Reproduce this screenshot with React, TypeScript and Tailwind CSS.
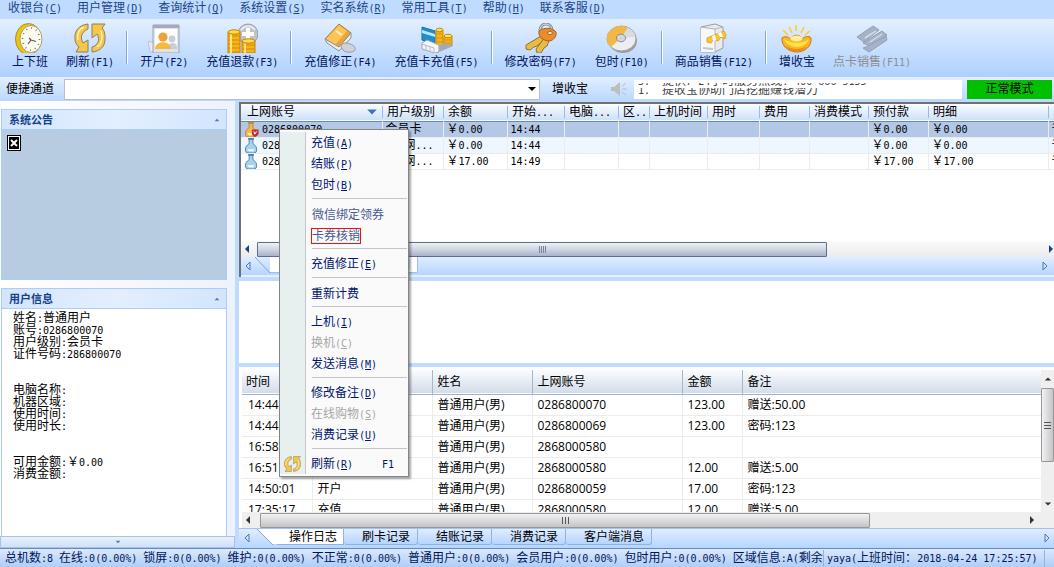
import React from 'react';
import clsx from 'clsx';

const latin = "font-['DejaVu_Sans_Mono',monospace] text-[10px]";

// Half-width characters take half the width of a Chinese one
const Txt: React.FC<{ text: string }> = ({ text }) => (
  <span className="whitespace-pre">
    {text.split(/([\x20-\x7e]+)/).map((part, i) =>
      i % 2 ? (
        <span key={i} className={latin}>
          {part}
        </span>
      ) : (
        part
      )
    )}
  </span>
);

// Label followed by its underlined access key
const KeyLabel: React.FC<{ label: string; hotkey?: string }> = ({ label, hotkey }) => (
  <span className="whitespace-pre">
    {label}
    {hotkey && (
      <span className={latin}>
        (<u>{hotkey}</u>)
      </span>
    )}
  </span>
);

const RefreshArrows: React.FC<{ className: string }> = ({ className }) => (
  <svg className={className} viewBox="0 0 32 30">
    <g fill="#f5c648" stroke="#8a8060" strokeWidth="1">
      <path d="M14 1C5 2 0 8 1 16c0 4 2 6 4 8l-3 5h12V17l-5 3C6 15 7 9 14 6z" />
      <path d="M18 1h13l-3 4c3 3 3 7 3 11 0 8-5 12-13 13v-5c7-2 8-8 5-13l-5 4z" />
    </g>
    <path d="M10 4C5 6 3 11 4 17M27 8c2 6 1 13-4 16" fill="none" stroke="#fff0a8" strokeWidth="1.5" />
  </svg>
);

const Icon: React.FC<{ name: string }> = ({ name }) => {
  if (name === 'refresh') return <RefreshArrows className="w-8 h-[30px]" />;
  return (
    <svg className="w-8 h-[30px]" viewBox="0 0 32 30">
      {name === 'clock' && (
        <>
          <ellipse cx="14.500" cy="16" rx="13" ry="15.500" fill="#efc400" stroke="#a08c50" />
          <ellipse cx="17" cy="16" rx="11" ry="13.5" fill="#fffdf2" stroke="#b0a068" />
          <ellipse cx="17" cy="16" rx="8.5" ry="11" fill="none" stroke="#777" strokeWidth="1.6" strokeDasharray="1 4.1" />
          <path d="M17 17l5 1.5M17 17l-3 4M17 17l-2-2" stroke="#555" strokeWidth="1.2" fill="none" />
        </>
      )}
      {name === 'user' && (
        <>
          <path d="M0 18l6 2v9H2z" fill="#e8ecf2" stroke="#bcc3cf" />
          <path d="M5 2h26v28H5z" fill="#dfe3e9" stroke="#9aa3b0" />
          <path d="M5 2h26v3H5z" fill="#a4abb6" />
          <path d="M7 6h22v20H7z" fill="#fdfdfd" />
          <circle cx="24" cy="16" r="3.4" fill="#c9cdd4" />
          <path d="M19 26c0-7 10-8 10-2v2z" fill="#c9cdd4" />
          <circle cx="15" cy="14" r="4.6" fill="#f0a23a" />
          <path d="M7 26c0-9 16-9 16 0z" fill="#f7b93a" />
        </>
      )}
      {name === 'coins' && (
        <>
          <circle cx="22" cy="11" r="10" fill="#bfc3c9" stroke="#999fa8" />
          <path d="M15 7c4-5 10-5 14 0" stroke="#e9ebee" strokeWidth="2" fill="none" />
          <path d="M20 5h4v4h4v4h-4v4h-4v-4h-4V9h4z" fill="#fff" />
          <path d="M2 9h12v21H2zM16 18h13v12H16z" fill="#f6b31c" stroke="#c98200" />
          <path d="M2 13h12M2 17h12M2 21h12M2 25h12M2 29h12M16 22h13M16 26h13" stroke="#d28a00" />
          <path d="M5 10v20M19 19v11" stroke="#ffe477" strokeWidth="2" />
          <ellipse cx="8" cy="9" rx="6" ry="2.2" fill="#ffd94f" stroke="#c98200" />
          <ellipse cx="22.500" cy="18" rx="6.500" ry="2.200" fill="#ffd94f" stroke="#c98200" />
        </>
      )}
      {name === 'book' && (
        <>
          <path d="M15 1l12 9-12 15L1 16z" fill="#eba43a" stroke="#99803f" />
          <path d="M15 2l8 6-12 14-9-6z" fill="#ffc456" />
          <path d="M1 16l2 4 12 8 12-13v-5L15 24z" fill="#eceded" stroke="#8f8f8f" />
          <path d="M12 8l6 4" stroke="#fff3c4" strokeWidth="2" />
          <path d="M17 24c0-4 5-5 9-3 4 1 6 4 5 6-2 3-9 3-12 0z" fill="#d0d2d6" stroke="#97999e" />
        </>
      )}
      {name === 'card' && (
        <>
          <path d="M1 4l13 4v13L1 17z" fill="#1f8fd0" stroke="#1670aa" />
          <path d="M1 7l13 4v3L1 10z" fill="#b9e4fa" />
          <path d="M15 7h7v16h-7zM23 13h8v10h-8z" fill="#f6b31c" stroke="#d08b00" />
          <path d="M15 11h7M15 15h7M15 19h7M23 17h8M23 20h8" stroke="#d99500" />
          <ellipse cx="18.500" cy="7" rx="3.500" ry="1.800" fill="#ffdf60" stroke="#d08b00" />
          <ellipse cx="27" cy="13" rx="4" ry="1.800" fill="#ffdf60" stroke="#d08b00" />
          <path d="M1 20l5-3 12 5v7l-4 1L1 26z" fill="#f4f5f8" stroke="#9da5b3" />
          <path d="M1 21l12 4v5M5 22v6M9 24v5" stroke="#b5bbc7" fill="none" />
          <path d="M18 29l12-5 2-2-9-2-5 3z" fill="#a3aab6" />
        </>
      )}
      {name === 'keys' && (
        <>
          <circle cx="21" cy="7" r="6" fill="none" stroke="#8c8c8c" strokeWidth="3" />
          <circle cx="21" cy="7" r="6" fill="none" stroke="#e1e3e6" />
          <path d="M16 13L1 22v4l4 1 4-3 3-1 7-6z" fill="#e9bb45" stroke="#8f7428" />
          <path d="M20 14l-9 12 1 4h4l3-5 3-2 3-8z" fill="#e9bb45" stroke="#8f7428" />
          <path d="M14 8c6-5 15-2 17 1 1 5-3 8-6 9-7 0-12-4-11-10z" fill="#ea8b2e" stroke="#9b6429" />
          <ellipse cx="25" cy="10" rx="2.500" ry="1.500" fill="#fff3dc" stroke="#a9641c" />
        </>
      )}
      {name === 'disc' && (
        <>
          <ellipse cx="17" cy="18" rx="14" ry="12" fill="#9c9ea3" />
          <ellipse cx="15.500" cy="15.500" rx="14.500" ry="12.500" fill="#eceef1" stroke="#a2a2a2" />
          <path d="M15 15L5 24C-1 18 0 8 8 5c5-3 11-2 14 0z" fill="#f5b743" />
          <path d="M15 15l7-10c4 2 6 5 7 9z" fill="#d9dbe0" />
          <ellipse cx="15" cy="15" rx="4.500" ry="3.800" fill="#d7d9de" stroke="#87888c" />
          <ellipse cx="15" cy="15" rx="2" ry="1.600" fill="#bcd5f7" />
        </>
      )}
      {name === 'shop' && (
        <>
          <path d="M3 4l14-3 8 3v21l-8 4H3z" fill="#e9eaec" stroke="#9a9da3" />
          <path d="M3 5l14 2v22H3z" fill="#f7f7f8" />
          <path d="M3 4l14 2v23M17 6l8-2" stroke="#b4b7bd" fill="none" />
          <path d="M9 15l17-7 2 4-1 4-4-2-3 4-4-2-3 4-4-1z" fill="#fbc531" stroke="#d8a73c" />
          <path d="M14 13l3-1 1 5-3 1zM20 10l3-1 2 5-3 0z" fill="#fff" />
          <path d="M5 25l10 1" stroke="#c3c5ca" strokeWidth="2" />
        </>
      )}
      {name === 'ingot' && (
        <>
          <path d="M15 8V2M11 10L8 4M20 10l3-6M7 12L2 7M24 12l5-4" stroke="#ffd11c" strokeWidth="1.6" />
          <path d="M1 15c3-3 8 0 9 1 1-5 10-5 11 0 2-2 7-4 9-1 1 8-6 14-14 14S0 23 1 15z" fill="#f9b81e" stroke="#d0701c" />
          <ellipse cx="15.500" cy="15.500" rx="6" ry="3" fill="#fff09a" />
          <path d="M3 16c7 5 18 5 25 0-1 4-6 8-12 8S4 20 3 16z" fill="#ffe04a" />
          <path d="M5 23c6 4 15 4 21 0-4 7-17 7-21 0z" fill="#f0851d" />
        </>
      )}
      {name === 'cards' && (
        <g fill="#a6b3c6" stroke="#93a0b5">
          <path d="M1 14L17 3l6 4L8 19z" />
          <path d="M7 20L26 8l5 4-15 12z" />
          <path d="M10 24l20-11 1 4-18 12-6-4z" />
          <path d="M9 15L20 8M14 19l12-8" stroke="#d3dbe8" strokeWidth="1.500" />
        </g>
      )}
    </svg>
  );
};

const Flask: React.FC<{ gold?: boolean }> = ({ gold }) => (
  <svg className="w-[15px] h-[15px] shrink-0" viewBox="0 0 15 16">
    <path
      d="M5 0h4v6c3 2 4 4 4 6 0 3-1 4-3 4H4c-2 0-3-1-3-4 0-2 1-4 4-6z"
      fill={gold ? '#f5b547' : '#a8d0ef'}
      stroke={gold ? '#c5852a' : '#4a81ae'}
    />
    <path d="M4 1h6" stroke={gold ? '#c5852a' : '#4a81ae'} strokeWidth="2" />
    <path d="M3 12h8l-2 2H5z" fill="#f4faff" />
    {gold && <path d="M8 8h7v4c0 2-2 3-4 4-2-1-3-2-3-4z" fill="#b83232" />}
    {gold && <path d="M10 10l1 3 2-3" stroke="#fff" fill="none" />}
  </svg>
);

const Arrow: React.FC<{ dir: 'left' | 'right' | 'up' | 'down'; className: string; outline?: boolean }> = ({ dir, className, outline }) => {
  const paths = { left: 'M6 1v8L2 5z', right: 'M3 1v8l4-4z', up: 'M1 7h8L5 3z', down: 'M1 3h8L5 7z' };
  return (
    <svg className={clsx('shrink-0', className)} viewBox="0 0 10 10">
      <path d={paths[dir]} fill={outline ? 'none' : 'currentColor'} stroke={outline ? 'currentColor' : 'none'} />
    </svg>
  );
};

const menus: [string, string][] = [
  ['收银台', 'C'],
  ['用户管理', 'D'],
  ['查询统计', 'Q'],
  ['系统设置', 'S'],
  ['实名系统', 'R'],
  ['常用工具', 'T'],
  ['帮助', 'H'],
  ['联系客服', 'D'],
];

const tools = [
  [['clock', '上下班'], ['refresh', '刷新(F1)']],
  [['user', '开户(F2)'], ['coins', '充值退款(F3)']],
  [['book', '充值修正(F4)'], ['card', '充值卡充值(F5)']],
  [['keys', '修改密码(F7)'], ['disc', '包时(F10)']],
  [['shop', '商品销售(F12)']],
  [['ingot', '增收宝'], ['cards', '点卡销售(F11)']],
];

const listCols = ['上网账号', '用户级别', '余额', '开始...', '电脑...', '区..', '上机时间', '用时', '费用', '消费模式', '预付款', '明细', ''];

const listRows = [
  ['0286800070', '会员卡', '￥0.00', '14:44', '', '', '', '', '', '', '￥0.00', '￥0.00', '千'],
  ['0286800069', 'VIP网...', '￥0.00', '14:44', '', '', '', '', '', '', '￥0.00', '￥0.00', '千'],
  ['0286800059', 'VIP网...', '￥17.00', '14:49', '', '', '', '', '', '', '￥17.00', '￥17.00', '千'],
];

const logRows = [
  ['14:44:49', '充值', '普通用户(男)', '0286800070', '123.00', '赠送:50.00'],
  ['14:44:20', '开户', '普通用户(男)', '0286800069', '123.00', '密码:123'],
  ['16:58:32', '结账', '普通用户(男)', '2868000580', '', ''],
  ['16:51:08', '充值', '普通用户(男)', '2868000580', '12.00', '赠送:5.00'],
  ['14:50:01', '开户', '普通用户(男)', '0286800059', '17.00', '密码:123'],
  ['17:35:17', '充值', '普通用户(男)', '2868000580', '12.00', '赠送:5.00'],
];

const logTabs = ['刷卡记录', '结账记录', '消费记录', '客户端消息'];

const userInfo = [
  '姓名:普通用户',
  '账号:0286800070',
  '用户级别:会员卡',
  '证件号码:286800070',
  '',
  '',
  '电脑名称:',
  '机器区域:',
  '使用时间:',
  '使用时长:',
  '',
  '',
  '可用金额:￥0.00',
  '消费金额:',
];

interface MenuEntry {
  label: string;
  hotkey?: string;
  disabled?: boolean;
  link?: boolean;
  boxed?: boolean;
  shortcut?: string;
}

const contextMenu: MenuEntry[][] = [
  [{ label: '充值', hotkey: 'A' }, { label: '结账', hotkey: 'P' }, { label: '包时', hotkey: 'B' }],
  [{ label: '微信绑定领券', link: true }, { label: '卡券核销', link: true, boxed: true }],
  [{ label: '充值修正', hotkey: 'E' }],
  [{ label: '重新计费' }],
  [{ label: '上机', hotkey: 'I' }, { label: '换机', hotkey: 'C', disabled: true }, { label: '发送消息', hotkey: 'M' }],
  [{ label: '修改备注', hotkey: 'D' }, { label: '在线购物', hotkey: 'S', disabled: true }, { label: '消费记录', hotkey: 'U' }],
  [{ label: '刷新', hotkey: 'R', shortcut: 'F1' }],
];

const PanelHeader: React.FC<{ title: string }> = ({ title }) => (
  <div className="flex items-center justify-between h-5 pl-[7px] pr-1.5 border-b border-[#a8ceff] bg-linear-to-r from-[#d3e5fd] via-[#e3efff] to-[#d3e5fd] shrink-0">
    <h2 className="font-bold text-[11px] text-[#15428b]">{title}</h2>
    <button aria-label={`收起${title}`}>
      <Arrow dir="up" className="w-1.5 h-1.5 text-[#4f79b5]" />
    </button>
  </div>
);

const ContextMenu = () => (
  <div role="menu" className="absolute left-[279px] top-[129px] w-[130px] flex flex-col border border-[#848484] bg-[#fafafa] shadow-[2px_2px_2px_rgba(0,0,0,0.35)] py-0.5">
    {contextMenu.map((group, g) => (
      <React.Fragment key={g}>
        {g > 0 && (
          <div className="flex h-2">
            <span className="w-[26px] bg-[#e8efef] border-r border-[#c5c5c5]" />
            <span className="flex-1 ml-1.5 mr-px h-1 border-b border-[#c5c5c5]" />
          </div>
        )}
        {group.map((item) => (
          <button
            key={item.label}
            role="menuitem"
            disabled={item.disabled}
            className={clsx(
              'flex items-stretch h-[21px] text-left',
              item.disabled ? 'text-[#a7a7a7]' : item.link ? 'text-[#4a5a94]' : 'text-[#00156e]'
            )}
          >
            <span className="w-[26px] bg-[#e8efef] border-r border-[#c5c5c5] flex items-center justify-center">
              {item.shortcut && <RefreshArrows className="w-[17px] h-4" />}
            </span>
            <span className={clsx('flex-1 flex items-center justify-between pr-3.5 pt-0.5', item.link ? 'pl-1.5' : 'pl-[5px]')}>
              <span className={clsx(item.boxed && 'outline outline-[#f01010] leading-[14px]')}>
                <KeyLabel label={item.label} hotkey={item.hotkey} />
              </span>
              {item.shortcut && <span className={latin}>{item.shortcut}</span>}
            </span>
          </button>
        ))}
      </React.Fragment>
    ))}
  </div>
);

const Sidebar = () => (
  <aside className="w-[235px] shrink-0 flex flex-col bg-linear-to-r from-white to-[#eef2fa]">
    <div className="flex-1 flex flex-col gap-2 pt-2 pl-px pr-2 min-h-0">
      <section className="h-[171px] flex flex-col border border-[#a8ceff] bg-[#b7cce0]">
        <PanelHeader title="系统公告" />
        <div className="p-[5px]">
          <div className="w-3.5 h-4 border border-black bg-white p-px">
            <svg className="w-full h-full bg-black" viewBox="0 0 10 12">
              <path d="M2 3l6 6M8 3L2 9" stroke="#fff" strokeWidth="2" />
            </svg>
          </div>
        </div>
      </section>
      <section className="flex-1 flex flex-col border border-b-0 border-[#a8ceff] bg-white">
        <PanelHeader title="用户信息" />
        <div className="pl-[11px] pt-[3px]">
          {userInfo.map((line, i) => (
            <p key={i} className="h-3 leading-3">
              <Txt text={line} />
            </p>
          ))}
        </div>
      </section>
    </div>
    <button aria-label="更多" className="h-3 shrink-0 flex items-center justify-center border border-[#a9c3e4] bg-linear-to-b from-[#e9f1fc] to-[#cfe0f8]">
      <Arrow dir="down" className="w-1.5 h-1.5 text-[#4f79b5]" />
    </button>
  </aside>
);

const AccountList = () => (
  <section className="h-[175px] shrink-0 flex flex-col border-t-2 border-l-2 border-[#707070] bg-white">
    <div className="flex-1 min-h-0 overflow-hidden">
      <table className="w-full table-fixed border-collapse">
        <colgroup>
          <col className="w-[141px]" />
          <col className="w-[61px]" />
          <col className="w-16" />
          <col className="w-[57px]" />
          <col className="w-[54px]" />
          <col className="w-[31px]" />
          <col className="w-[58px]" />
          <col className="w-[52px]" />
          <col className="w-[50px]" />
          <col className="w-[59px]" />
          <col className="w-[60px]" />
          <col className="w-[120px]" />
          <col />
        </colgroup>
        <thead>
          <tr className="h-[17px] bg-linear-to-b from-[#fbfdff] to-[#cde0fb] border-b border-[#5f8bc0]">
            {listCols.map((col, i) => (
              <th key={i} className={clsx('p-0 font-normal text-left leading-[15px] overflow-hidden', i === 0 && 'pl-1.5')}>
                <div className={clsx('flex items-center justify-between h-3', i > 0 && 'border-l border-[#8fbcf5] pl-1')}>
                  <Txt text={col} />
                  {i === 0 && <Arrow dir="down" className="w-3 h-3 text-[#3f74b8] mr-1" />}
                </div>
              </th>
            ))}
          </tr>
        </thead>
        <tbody>
          {listRows.map((row, r) => (
            <tr key={r} className={clsx('border-b border-[#ececec]', r === 0 && 'bg-[#b3c7e7]', r === 1 && 'bg-[#eef6ff]')}>
              {row.map((cell, c) => (
                <td key={c} className={clsx('p-0', c > 0 && 'border-l border-[#ececec] pl-[3px]')}>
                  <div className={clsx('flex items-center h-[15px] gap-[3px] overflow-hidden', c === 0 && 'pl-[3px]')}>
                    {c === 0 && <Flask gold={r === 0} />}
                    <Txt text={cell} />
                  </div>
                </td>
              ))}
            </tr>
          ))}
        </tbody>
      </table>
    </div>
    <div className="h-4 shrink-0 flex items-center bg-linear-to-b from-[#fafafa] to-[#ececec] pl-0.5">
      <Arrow dir="left" className="w-2.5 h-2.5 text-[#15428b]" />
      <div className="ml-1 h-[15px] w-[570px] flex items-center justify-center gap-px border border-[#5d6c96] rounded-[1px] bg-linear-to-b from-[#eef1f6] via-[#cfd5e0] to-[#a9b3c8]">
        {[0, 1, 2, 3].map((n) => (
          <span key={n} className="w-px h-[7px] bg-[#7c8394]" />
        ))}
      </div>
      <Arrow dir="right" className="w-2.5 h-2.5 text-[#15428b] ml-auto -mr-0.5" />
    </div>
    <div className="h-5 shrink-0 flex items-start bg-linear-to-b from-[#e0edff] to-[#b5d5ff] border-b-2 border-[#e8eef7] pl-[3px]">
      <Arrow dir="left" outline className="w-2.5 h-2.5 text-[#4f79b5] mt-1" />
      <svg className="w-4 h-4" viewBox="0 0 16 16">
        <path d="M1 0l15 16" stroke="#7fa6d6" />
      </svg>
      <button className="h-4 w-[148px] pr-1.5 text-right bg-white border-r border-b border-[#9dbfe8] rounded-br-xs leading-4">今日</button>
      <Arrow dir="right" outline className="w-2.5 h-2.5 text-[#4f79b5] mt-1 ml-auto mr-1" />
    </div>
  </section>
);

const LogPanel = () => (
  <section className="flex-1 min-h-0 flex flex-col bg-white">
    <div className="flex-1 min-h-0 flex pl-[3px] pt-[3px]">
      <div className="flex-1 min-w-0 flex flex-col">
        <div className="flex-1 min-h-0 overflow-hidden">
          <table className="w-full table-fixed border-collapse">
            <colgroup>
              <col className="w-[70px]" />
              <col className="w-[120px]" />
              <col className="w-[100px]" />
              <col className="w-[150px]" />
              <col className="w-[60px]" />
              <col />
            </colgroup>
            <thead>
              <tr className="h-6 bg-linear-to-b from-[#fafcfe] to-[#d3dce9] border-b border-[#9db4cf]">
                {['时间', '类型', '姓名', '上网账号', '金额', '备注'].map((col, i) => (
                  <th key={col} className={clsx('p-0 font-normal text-left', i > 0 ? 'border-l border-[#a3b7d0] pl-[5px]' : 'pl-1')}>
                    {col}
                  </th>
                ))}
              </tr>
            </thead>
            <tbody className="font-['Open_Sans','Noto_Sans_CJK_SC',sans-serif]">
              {logRows.map((row, r) => (
                <tr key={r} className="h-[21px] border-b border-[#ececec]">
                  {row.map((cell, c) => (
                    <td key={c} className={clsx('p-0 leading-5 whitespace-nowrap', c > 0 ? 'border-l border-[#ececec] pl-[5px]' : 'pl-1.5')}>
                      {cell}
                    </td>
                  ))}
                </tr>
              ))}
            </tbody>
          </table>
        </div>
        <div className="h-4 shrink-0 flex items-center bg-[#efefef] pl-0.5">
          <Arrow dir="left" className="w-2.5 h-2.5 text-[#333]" />
          <div className="ml-1.5 w-[610px] h-[15px] flex items-center justify-center gap-0.5 border border-[#979797] rounded-[1px] bg-linear-to-b from-[#f2f2f2] to-[#c4c4c8]">
            {[0, 1, 2].map((n) => (
              <span key={n} className="w-px h-[7px] bg-[#555]" />
            ))}
          </div>
          <Arrow dir="right" className="w-2.5 h-2.5 text-[#333] ml-auto mr-1" />
        </div>
      </div>
      <div className="w-[13px] flex flex-col items-center bg-[#efefef]">
        <Arrow dir="up" className="w-2 h-2 text-[#333] my-[5px]" />
        <div className="w-full h-[74px] flex flex-col items-center justify-center gap-0.5 border border-[#979797] rounded-[1px] bg-linear-to-r from-[#f2f2f2] to-[#c4c4c8]">
          {[0, 1, 2].map((n) => (
            <span key={n} className="w-[7px] h-px bg-[#555]" />
          ))}
        </div>
        <Arrow dir="down" className="w-2 h-2 text-[#333] mt-auto mb-5" />
      </div>
    </div>
    <div role="tablist" className="h-5 shrink-0 flex items-start bg-linear-to-b from-[#e0edff] to-[#b5d5ff] border-t border-[#9fc3f2] pl-1">
      <Arrow dir="left" outline className="w-2.5 h-2.5 text-[#4f79b5] mt-1" />
      <svg className="w-5 h-4 ml-1 shrink-0" viewBox="0 0 20 16">
        <path d="M0 0h20v16h-4z" fill="#fff" />
        <path d="M0 0l16 16h4" stroke="#7fa6d6" fill="none" />
      </svg>
      <button role="tab" aria-selected="true" className="h-4 pl-3 pr-1.5 leading-4 bg-white border-r border-b border-[#8fb4e0]">
        操作日志
      </button>
      {logTabs.map((tab) => (
        <button key={tab} role="tab" className="h-4 pl-[18px] pr-[7px] leading-4 border-r border-b border-[#8fb4e0] rounded-b-[3px] bg-linear-to-b from-[#e0edff] to-[#b5d5ff]">
          {tab}
        </button>
      ))}
      <Arrow dir="right" outline className="w-2.5 h-2.5 text-[#4f79b5] mt-1 ml-auto mr-0.5" />
    </div>
  </section>
);

export default function App() {
  return (
    <div className="relative h-screen flex flex-col overflow-hidden bg-[#bfdbff] text-black text-[12px] leading-4 font-['Liberation_Sans','Noto_Sans_CJK_SC',sans-serif]">
      <nav className="h-[19px] shrink-0 flex items-start gap-[15px] px-2 text-[#1c4587]">
        {menus.map(([label, hotkey]) => (
          <button key={label} className="h-4 leading-4">
            <KeyLabel label={label} hotkey={hotkey} />
          </button>
        ))}
      </nav>

      <div className="h-[58px] shrink-0 flex items-start pl-[3px] pt-1 bg-linear-to-b from-[#e3efff] to-[#aed0ff] text-[#00155c]">
        {tools.map((group, g) => (
          <React.Fragment key={g}>
            {g > 0 && <span className="w-0.5 h-[33px] mt-2 ml-[3px] mr-[3px] bg-[#7fa8dc] border-r border-white shrink-0" />}
            {group.map(([icon, label]) => (
              <button key={label} disabled={icon === 'cards'} className="flex flex-col items-center px-[9px] shrink-0 disabled:text-[#8d8d8d]">
                <Icon name={icon} />
                <span className="leading-4 mt-px">
                  <Txt text={label} />
                </span>
              </button>
            ))}
          </React.Fragment>
        ))}
      </div>

      <div className="h-6 shrink-0 flex items-center pl-1.5 pr-0.5 bg-linear-to-b from-[#e3efff] to-[#b9d7ff]">
        <label htmlFor="channel" className="w-[58px]">
          便捷通道
        </label>
        <div className="flex w-[476px] h-[21px] items-center bg-white border border-[#b9bfca] pr-0.5">
          <select id="channel" className="flex-1 h-full appearance-none bg-transparent" />
          <Arrow dir="down" className="w-2.5 h-2.5 text-black" />
        </div>
        <span className="ml-3 w-[59px]">增收宝</span>
        <svg className="w-4 h-4 mr-[7px]" viewBox="0 0 16 16">
          <path d="M0 6h3l6-5v14L3 10H0z" fill="#bdbdbd" />
          <path d="M11 8h5M11 5l4-3M11 11l4 3" stroke="#bdbdbd" />
        </svg>
        {/* Ticker caught between two lines */}
        <div className="flex-1 h-[19px] bg-white pl-1 pt-[3px] text-[#444] leading-3">
          <div className="h-[5px] flex items-end overflow-hidden">
            <Txt text="5.  提供7*24小时服务热线: 400-666-5155" />
          </div>
          <div className="h-[9px] flex items-end overflow-hidden">
            <Txt text="1.  提收宝协助门店挖掘赚钱潜力" />
          </div>
        </div>
        <button className="ml-[5px] w-[85px] h-[19px] bg-[#00c000] leading-[19px]">正常模式</button>
      </div>

      <div className="flex-1 min-h-0 flex">
        <Sidebar />
        <main className="flex-1 min-w-0 ml-1 flex flex-col">
          <div className="h-px shrink-0" />
          <AccountList />
          <div className="h-[82px] shrink-0 my-1 bg-white" />
          <LogPanel />
        </main>
      </div>

      <footer className="h-[19px] shrink-0 flex items-center border-t border-[#5f8bc8] bg-linear-to-b from-[#dbe9fd] to-[#b0cdf5] px-[5px] text-[#00155c] whitespace-nowrap">
        <div className="flex-1 min-w-0 flex overflow-hidden border-r border-[#8fb4e0] mr-[3px]">
          <Txt text="总机数:8 在线:0(0.00%) 锁屏:0(0.00%) 维护:0(0.00%) 不正常:0(0.00%) 普通用户:0(0.00%) 会员用户:0(0.00%) 包时用户:0(0.00%) 区域信息:A(剩余" />
        </div>
        <div className="w-[218px] border-r border-[#8fb4e0] mr-1">
          <Txt text="yaya(上班时间：2018-04-24 17:25:57)" />
        </div>
      </footer>

      <ContextMenu />
    </div>
  );
}
